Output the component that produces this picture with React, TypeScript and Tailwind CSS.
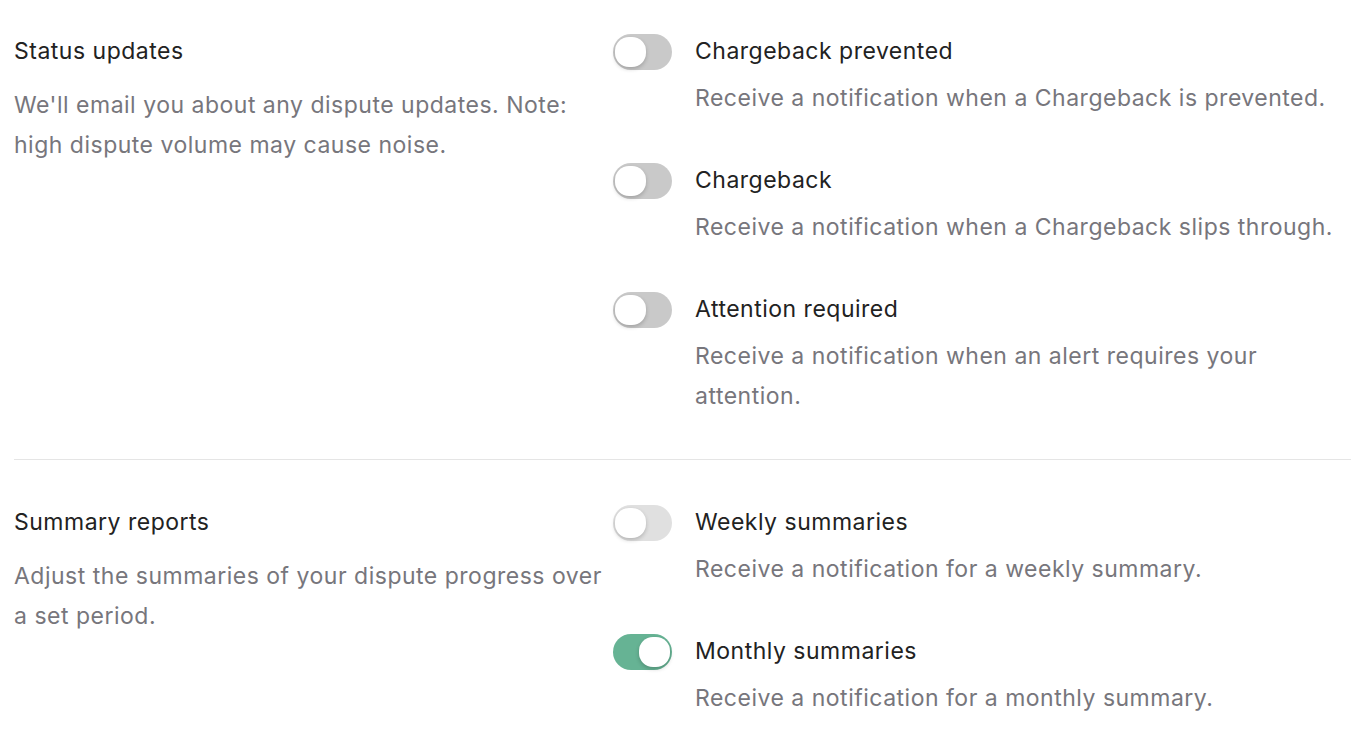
import { useState } from 'react';

interface Pref {
  id: string;
  title: string;
  description: string;
  enabled: boolean;
  muted?: boolean;
}

interface Section {
  title: string;
  description: string;
  prefs: Pref[];
}

const sections: Section[] = [
  {
    title: 'Status updates',
    description: "We'll email you about any dispute updates. Note: high dispute volume may cause noise.",
    prefs: [
      {
        id: 'prevented',
        title: 'Chargeback prevented',
        description: 'Receive a notification when a Chargeback is prevented.',
        enabled: false
      },
      {
        id: 'chargeback',
        title: 'Chargeback',
        description: 'Receive a notification when a Chargeback slips through.',
        enabled: false
      },
      {
        id: 'attention',
        title: 'Attention required',
        description: 'Receive a notification when an alert requires your attention.',
        enabled: false
      }
    ]
  },
  {
    title: 'Summary reports',
    description: 'Adjust the summaries of your dispute progress over a set period.',
    prefs: [
      {
        id: 'weekly',
        title: 'Weekly summaries',
        description: 'Receive a notification for a weekly summary.',
        enabled: false,
        muted: true
      },
      {
        id: 'monthly',
        title: 'Monthly summaries',
        description: 'Receive a notification for a monthly summary.',
        enabled: true
      }
    ]
  }
];

function Toggle({ on, muted, onClick }: { on: boolean; muted?: boolean; onClick: () => void }) {
  return (
    <button
      type="button"
      onClick={onClick}
      className={`mt-[3px] flex h-[36px] w-[59px] shrink-0 items-center rounded-full px-[2px] transition-colors ${
        on ? 'justify-end bg-[#66b394]' : muted ? 'bg-[#e0e0e0]' : 'bg-[#c9c9c9]'
      }`}
    >
      <span className="h-[30px] w-[31px] rounded-[14px] bg-white shadow-[0_2px_4px_rgba(0,0,0,0.2)]" />
    </button>
  );
}

export default function App() {
  const [prefs, setPrefs] = useState<Record<string, boolean>>(() => {
    const init: Record<string, boolean> = {};
    sections.forEach(s => s.prefs.forEach(p => (init[p.id] = p.enabled)));
    return init;
  });

  const toggle = (id: string) => setPrefs(prev => ({ ...prev, [id]: !prev[id] }));

  return (
    <div className="min-h-screen bg-white pl-[14px] font-['Inter',sans-serif] text-[23px] tracking-[0.5px]">
      {sections.map((section, i) => (
        <div key={section.title} className={i > 0 ? 'border-t border-[#e5e5e5] pt-[42px]' : 'pt-[31px] pb-[43px]'}>
          <div className="flex">
            <div className="w-[599px] shrink-0 pr-[4px]">
              <h2 className="leading-[40px] text-[#222222]">{section.title}</h2>
              <p className="mt-[14px] leading-[40px] text-[#77767c]">{section.description}</p>
            </div>
            <div className="flex flex-1 flex-col gap-[42px]">
              {section.prefs.map(p => (
                <div key={p.id} className="flex gap-[23px]">
                  <Toggle on={prefs[p.id]} muted={p.muted} onClick={() => toggle(p.id)} />
                  <div>
                    <h3 className="leading-[40px] text-[#222222]">{p.title}</h3>
                    <p className="mt-[7px] leading-[40px] text-[#77767c]">{p.description}</p>
                  </div>
                </div>
              ))}
            </div>
          </div>
        </div>
      ))}
    </div>
  );
}
